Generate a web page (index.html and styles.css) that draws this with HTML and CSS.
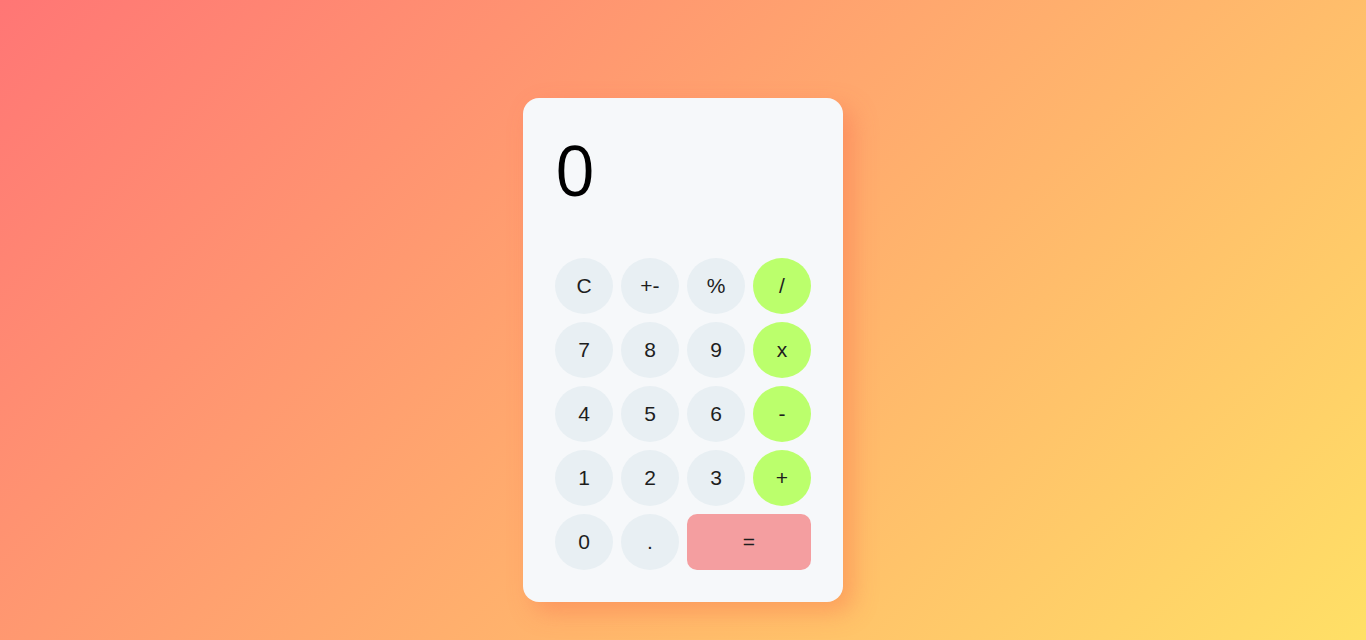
FILE: index.html
```html
<!DOCTYPE html>
<html lang="en">
<head>
<meta charset="utf-8">
<title>Calculator</title>
<link rel="stylesheet" href="styles.css">
</head>
<body>
<main class="calculator">
  <div class="display">0</div>
  <div class="keys">
    <button class="key">C</button>
    <button class="key">+-</button>
    <button class="key">%</button>
    <button class="key op">/</button>
    <button class="key">7</button>
    <button class="key">8</button>
    <button class="key">9</button>
    <button class="key op">x</button>
    <button class="key">4</button>
    <button class="key">5</button>
    <button class="key">6</button>
    <button class="key op">-</button>
    <button class="key">1</button>
    <button class="key">2</button>
    <button class="key">3</button>
    <button class="key op">+</button>
    <button class="key">0</button>
    <button class="key">.</button>
    <button class="key equals">=</button>
  </div>
</main>
</body>
</html>
```

FILE: styles.css
```css
html, body {
  margin: 0;
  height: 100%;
}
body {
  background: linear-gradient(135deg, #ff7675 0%, #ffe066 100%);
  display: flex;
  justify-content: center;
  align-items: flex-start;
  padding-top: 98px;
  box-sizing: border-box;
  font-family: "Liberation Sans", Arial, sans-serif;
}
.calculator {
  width: 256px;
  padding: 32px;
  background: #f6f8fa;
  border-radius: 16px;
  box-shadow: 10px 10px 24px rgba(245, 95, 70, 0.35);
}
.display {
  height: 96px;
  margin-bottom: 32px;
  font-family: "Open Sans", sans-serif;
  font-weight: 400;
  font-size: 70px;
  line-height: 78px;
  color: #000;
}
.keys {
  display: grid;
  grid-template-columns: repeat(4, 58px);
  grid-auto-rows: 56px;
  gap: 8px;
}
.key {
  border: none;
  border-radius: 50%;
  background: #e8eff3;
  font-family: "Liberation Sans", Arial, sans-serif;
  font-size: 21px;
  color: #1e1e1e;
  padding: 0;
}
.op {
  background: #bbff6c;
}
.equals {
  grid-column: span 2;
  border-radius: 10px;
  background: #f49ea0;
}
```
